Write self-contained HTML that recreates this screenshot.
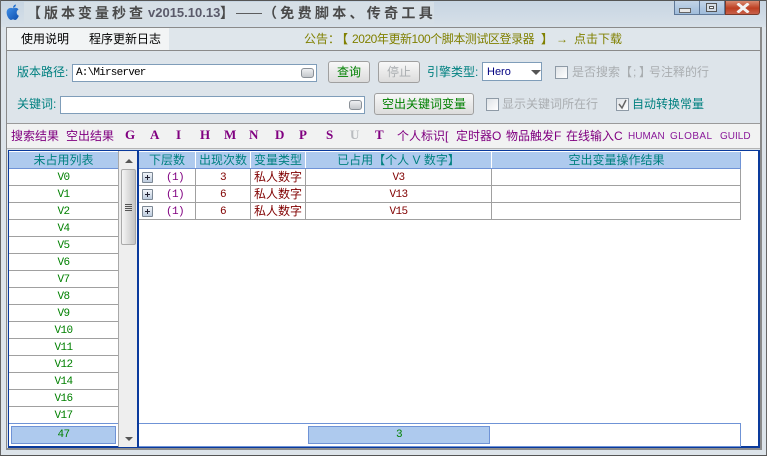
<!DOCTYPE html>
<html><head><meta charset="utf-8">
<style>
html,body{margin:0;padding:0;background:#fff}
#w{position:relative;width:767px;height:456px;overflow:hidden;background:#dde4ea;font-family:"Liberation Sans","WenQuanYi Zen Hei","Noto Sans CJK SC",sans-serif;font-size:12px;line-height:14px}
#w div,#w span.a,#w svg{position:absolute}
.t{white-space:nowrap}
.teal{color:#008080}.green{color:#008000}.pur{color:#800080}.mar{color:#800000}.gray{color:#a9adb0}.ol{color:#808000}
.inp{background:#fff;border:1px solid #7f9db9;box-sizing:border-box}
.btn{box-sizing:border-box;border:1px solid #a0a0a0;border-radius:3px;background:linear-gradient(#f8f8f8,#dcdcdc);text-align:center}
.oval{box-sizing:border-box;width:13px;height:10px;border:1px solid #8a9097;border-radius:3px;background:linear-gradient(#eef0f2,#c4c8cc)}
.cb{box-sizing:border-box;width:13px;height:13px;border:1px solid #8e9aa6;background:linear-gradient(135deg,#dfe3e7,#fff)}
.h{background:#aecaee;height:16px;top:152px;color:#008080;text-align:center;line-height:16px}
.sep{background:#fff;width:1px;top:153px;height:14px}
.r{background:#a0a0a0;height:1px}
.c{text-align:center;height:18px;line-height:18px;font-family:"Liberation Mono","WenQuanYi Zen Hei",monospace;font-size:11px;letter-spacing:-.6px;white-space:nowrap}
.z{font-family:inherit;font-size:12px;letter-spacing:0;height:16px;line-height:16px}
.plus{box-sizing:border-box;width:11px;height:11px;border:1px solid #7b8794;border-radius:1px;background:linear-gradient(#f2f5f9,#bccbdd);left:142px}
.plus::before{content:"";position:absolute;left:2px;top:4px;width:5px;height:1px;background:#223}
.plus::after{content:"";position:absolute;left:4px;top:2px;width:1px;height:5px;background:#223}
.l{font-family:"Liberation Serif",serif;font-weight:bold;font-size:13px;color:#800080;top:128px}
.ti{top:3px;font-size:14px;line-height:20px;font-weight:bold;color:#4a4a4a}
</style></head><body><div id="w">

<!-- window frame -->
<div style="left:0;top:0;width:767px;height:27px;background:linear-gradient(#c6d4e2,#d7e0e8)"></div>
<div style="left:24px;top:2px;width:410px;height:22px;background:#d6dfe6"></div>
<div style="left:0;top:0;width:767px;height:1px;background:#555"></div>
<div style="left:0;top:0;width:1px;height:456px;background:#666"></div>
<div style="left:766px;top:0;width:1px;height:456px;background:#666"></div>
<div style="left:0;top:455px;width:767px;height:1px;background:#555"></div>
<div style="left:6px;top:27px;width:1px;height:422px;background:#8a8a8a"></div>
<div style="left:760px;top:27px;width:2px;height:422px;background:#8a8a8a"></div>
<div style="left:6px;top:448px;width:756px;height:2px;background:#8c8c8c"></div>

<!-- apple icon -->
<svg style="left:5px;top:4px" width="16" height="17" viewBox="0 0 15 16"><defs><linearGradient id="ap" x1="0" y1="0" x2="1" y2="1"><stop offset="0" stop-color="#3f8fe8"/><stop offset="1" stop-color="#0f4fae"/></linearGradient></defs><path d="M7.500 4C5 3 1.500 4 1.500 8c0 3.500 2.500 7 4 7 1 0 1.200-.5 2-.5s1 .5 2 .5c1.300 0 2.800-2 3.500-4-2.500-1-2.800-4.500-.3-6C11.500 3.500 9.500 3 7.500 4z" fill="url(#ap)"/><path d="M7.500 3.500C7.500 2 8.700.7 10.300.5 10.300 2 9 3.500 7.500 3.500z" fill="#1f6fd0"/></svg>

<!-- title -->
<div class="t ti" style="left:27px;letter-spacing:3px">【版本变量秒查</div>
<div class="t ti" style="left:148px;font-size:13px;color:#5a5a6a">v2015.10.13</div>
<div class="t ti" style="left:220px">】</div>
<div class="t ti" style="left:236px;font-size:13px;font-weight:normal">——</div>
<div class="t ti" style="left:263px;letter-spacing:3.300px">（免费脚本、传奇工具</div>

<!-- window buttons -->
<div style="left:674px;top:1px;width:51px;height:14px;background:linear-gradient(#c3d4e7,#9fbcdb);border:1px solid #5f7898;border-top:0;box-sizing:border-box"></div>
<div style="left:699px;top:1px;width:1px;height:14px;background:#5f7898"></div>
<div style="left:679px;top:8px;width:10px;height:3px;background:#e8e8e8;border:1px solid #666"></div>
<div style="left:706px;top:3px;width:11px;height:9px;background:#d6dde5;border:1px solid #555;box-sizing:border-box"></div>
<div style="left:709px;top:6px;width:5px;height:3px;background:#fff;border:1px solid #555;box-sizing:border-box"></div>
<div style="left:725px;top:1px;width:35px;height:14px;background:linear-gradient(#d98a70,#bd3f22 55%,#c8604a);border:1px solid #7a3a2a;border-top:0;border-radius:0 0 3px 0;box-sizing:border-box"></div>
<svg style="left:736px;top:3px" width="14" height="10"><path d="M1.500 0.500L12.500 9.500M12.500 0.500L1.500 9.500" stroke="#f2f2f2" stroke-width="3" fill="none"/></svg>

<!-- menu bar -->
<div style="left:7px;top:28px;width:753px;height:22px;background:#dfe6eb"></div>
<div style="left:7px;top:28px;width:162px;height:22px;background:#f2f4f5"></div>
<div style="left:6px;top:27px;width:755px;height:1px;background:#8a8a8a"></div>
<div style="left:6px;top:50px;width:755px;height:1px;background:#8a8a8a"></div>
<div class="t" style="left:21px;top:32px;color:#000">使用说明</div>
<div class="t" style="left:89px;top:32px;color:#000">程序更新日志</div>
<div class="t ol" style="left:304px;top:32px">公告：</div>
<div class="t ol" style="left:336px;top:32px;font-weight:bold">【</div>
<div class="t ol" style="left:352px;top:32px;letter-spacing:-.45px">2020年更新100个脚本测试区登录器</div>
<div class="t ol" style="left:541px;top:32px;font-weight:bold">】</div>
<div class="t ol" style="left:556px;top:32px">→</div>
<div class="t ol" style="left:574px;top:32px">点击下载</div>

<!-- row 1 -->
<div class="t teal" style="left:17px;top:65px">版本路径:</div>
<div class="inp" style="left:72px;top:64px;width:245px;height:18px"></div>
<div class="t" style="left:76px;top:66px;font-family:'Liberation Mono',monospace;font-size:11px;letter-spacing:-.8px">A:\Mirserver</div>
<div class="oval" style="left:301px;top:68px"></div>
<div class="btn green" style="left:328px;top:61px;width:42px;height:22px;line-height:20px">查询</div>
<div class="btn gray" style="left:378px;top:61px;width:42px;height:22px;line-height:20px">停止</div>
<div class="t teal" style="left:427px;top:65px">引擎类型:</div>
<div class="inp" style="left:482px;top:62px;width:60px;height:19px"></div>
<div class="t" style="left:487px;top:65px;color:#000080;font-size:11px">Hero</div>
<svg style="left:531px;top:70px" width="10" height="5"><path d="M0 0h10L5 5z" fill="#555"/></svg>
<div class="cb" style="left:555px;top:66px"></div>
<div class="t gray" style="left:572px;top:65px">是否搜索</div>
<div class="t gray" style="left:620px;top:65px">【</div>
<div class="t gray" style="left:633px;top:65px">;</div>
<div class="t gray" style="left:639px;top:65px">】</div>
<div class="t gray" style="left:649px;top:65px">号注释的行</div>

<!-- row 2 -->
<div class="t teal" style="left:17px;top:97px">关键词:</div>
<div class="inp" style="left:60px;top:96px;width:305px;height:18px"></div>
<div class="oval" style="left:349px;top:100px"></div>
<div class="btn green" style="left:374px;top:93px;width:100px;height:22px;line-height:20px">空出关键词变量</div>
<div class="cb" style="left:486px;top:98px"></div>
<div class="t gray" style="left:502px;top:97px">显示关键词所在行</div>
<div class="cb" style="left:616px;top:98px"></div>
<svg style="left:617px;top:99px" width="11" height="11"><path d="M2 5l3 4 4-8" fill="none" stroke="#666" stroke-width="1.500"/></svg>
<div class="t teal" style="left:632px;top:97px">自动转换常量</div>

<!-- tab row -->
<div style="left:7px;top:124px;width:753px;height:24px;background:#f1f2f2"></div>
<div style="left:7px;top:123px;width:753px;height:1px;background:#9a9a9a"></div>
<div style="left:7px;top:148px;width:753px;height:1px;background:#b5b5b5"></div>
<div class="t pur" style="left:11px;top:129px">搜索结果</div>
<div class="t pur" style="left:66px;top:129px">空出结果</div>
<div class="t l" style="left:125px">G</div>
<div class="t l" style="left:150px">A</div>
<div class="t l" style="left:176px">I</div>
<div class="t l" style="left:200px">H</div>
<div class="t l" style="left:224px">M</div>
<div class="t l" style="left:249px">N</div>
<div class="t l" style="left:275px">D</div>
<div class="t l" style="left:299px">P</div>
<div class="t l" style="left:326px">S</div>
<div class="t l" style="left:350px;color:#b9bcbf">U</div>
<div class="t l" style="left:375px">T</div>
<div class="t pur" style="left:397px;top:129px">个人标识[</div>
<div class="t pur" style="left:456px;top:129px">定时器O</div>
<div class="t pur" style="left:506px;top:129px">物品触发F</div>
<div class="t pur" style="left:566px;top:129px">在线输入C</div>
<div class="t pur" style="left:628px;top:130px;font-size:10px;color:#8a1a9a">HUMAN</div>
<div class="t pur" style="left:670px;top:130px;font-size:10px;letter-spacing:.4px;color:#8a1a9a">GLOBAL</div>
<div class="t pur" style="left:720px;top:130px;font-size:10px;color:#8a1a9a">GUILD</div>

<!-- grid container -->
<div style="left:8px;top:150px;width:752px;height:298px;background:#fff;box-sizing:border-box;border:2px solid #0a3a9c;border-width:1px 2px 2px 1px"></div>
<div style="left:137px;top:151px;width:2px;height:296px;background:#0a3a9c"></div>

<!-- scrollbar -->
<div style="left:119px;top:151px;width:18px;height:296px;background:#eeeeee"></div>
<svg style="left:125px;top:159px" width="8" height="5"><path d="M4 0l4 4H0z" fill="#555"/></svg>
<svg style="left:125px;top:437px" width="8" height="5"><path d="M0 0h8L4 4z" fill="#555"/></svg>
<div style="left:121px;top:169px;width:15px;height:76px;box-sizing:border-box;border:1px solid #aaa;border-radius:2px;background:linear-gradient(90deg,#f5f5f5,#c4c4c4)"></div>
<div style="left:125px;top:204px;width:7px;height:1px;background:#555;box-shadow:0 2px 0 #555,0 4px 0 #555,0 6px 0 #555"></div>

<!-- left list -->
<div class="h" style="left:9px;width:109px">未占用列表</div>
<div style="left:9px;top:168px;width:109px;height:1px;background:#6f93d6"></div>
<div style="left:118px;top:151px;width:1px;height:296px;background:#a8a8a8"></div>
<div class="c green" style="left:9px;width:109px;top:169px">V0</div><div class="r" style="left:9px;width:109px;top:185px"></div>
<div class="c green" style="left:9px;width:109px;top:186px">V1</div><div class="r" style="left:9px;width:109px;top:202px"></div>
<div class="c green" style="left:9px;width:109px;top:203px">V2</div><div class="r" style="left:9px;width:109px;top:219px"></div>
<div class="c green" style="left:9px;width:109px;top:220px">V4</div><div class="r" style="left:9px;width:109px;top:236px"></div>
<div class="c green" style="left:9px;width:109px;top:237px">V5</div><div class="r" style="left:9px;width:109px;top:253px"></div>
<div class="c green" style="left:9px;width:109px;top:254px">V6</div><div class="r" style="left:9px;width:109px;top:270px"></div>
<div class="c green" style="left:9px;width:109px;top:271px">V7</div><div class="r" style="left:9px;width:109px;top:287px"></div>
<div class="c green" style="left:9px;width:109px;top:288px">V8</div><div class="r" style="left:9px;width:109px;top:304px"></div>
<div class="c green" style="left:9px;width:109px;top:305px">V9</div><div class="r" style="left:9px;width:109px;top:321px"></div>
<div class="c green" style="left:9px;width:109px;top:322px">V10</div><div class="r" style="left:9px;width:109px;top:338px"></div>
<div class="c green" style="left:9px;width:109px;top:339px">V11</div><div class="r" style="left:9px;width:109px;top:355px"></div>
<div class="c green" style="left:9px;width:109px;top:356px">V12</div><div class="r" style="left:9px;width:109px;top:372px"></div>
<div class="c green" style="left:9px;width:109px;top:373px">V14</div><div class="r" style="left:9px;width:109px;top:389px"></div>
<div class="c green" style="left:9px;width:109px;top:390px">V16</div><div class="r" style="left:9px;width:109px;top:406px"></div>
<div class="c green" style="left:9px;width:109px;top:407px">V17</div>
<div style="left:9px;top:423px;width:109px;height:1px;background:#6f93d6"></div>
<div style="left:11px;top:426px;width:105px;height:18px;box-sizing:border-box;background:#aecaee;border:1px solid #6f93d6"></div>
<div class="c green" style="left:11px;width:105px;top:426px">47</div>

<!-- right header -->
<div class="h" style="left:139px;width:56px">下层数</div>
<div class="h" style="left:196px;width:54px">出现次数</div>
<div class="h" style="left:251px;width:54px">变量类型</div>
<div class="h" style="left:306px;width:185px">已占用【个人 V 数字】</div>
<div class="h" style="left:492px;width:249px">空出变量操作结果</div>
<div class="sep" style="left:195px"></div><div class="sep" style="left:250px"></div><div class="sep" style="left:305px"></div><div class="sep" style="left:491px"></div>
<div style="left:139px;top:168px;width:602px;height:1px;background:#6f93d6"></div>
<div style="left:740px;top:152px;width:1px;height:16px;background:#6f93d6"></div>

<!-- right rows -->
<div class="r" style="left:139px;width:602px;top:185px"></div>
<div class="r" style="left:139px;width:602px;top:202px"></div>
<div class="r" style="left:139px;width:602px;top:219px"></div>
<div style="left:195px;top:169px;width:1px;height:50px;background:#a0a0a0"></div>
<div style="left:250px;top:169px;width:1px;height:50px;background:#a0a0a0"></div>
<div style="left:305px;top:169px;width:1px;height:50px;background:#a0a0a0"></div>
<div style="left:491px;top:169px;width:1px;height:50px;background:#a0a0a0"></div>
<div style="left:740px;top:169px;width:1px;height:50px;background:#a0a0a0"></div>

<div class="plus" style="top:172px"></div><div class="plus" style="top:189px"></div><div class="plus" style="top:206px"></div>
<div class="c pur" style="left:155px;width:40px;top:169px">(1)</div>
<div class="c pur" style="left:155px;width:40px;top:186px">(1)</div>
<div class="c pur" style="left:155px;width:40px;top:203px">(1)</div>
<div class="c mar" style="left:196px;width:54px;top:169px">3</div>
<div class="c mar" style="left:196px;width:54px;top:186px">6</div>
<div class="c mar" style="left:196px;width:54px;top:203px">6</div>
<div class="c mar z" style="left:251px;width:54px;top:169px">私人数字</div>
<div class="c mar z" style="left:251px;width:54px;top:186px">私人数字</div>
<div class="c mar z" style="left:251px;width:54px;top:203px">私人数字</div>
<div class="c mar" style="left:306px;width:185px;top:169px">V3</div>
<div class="c mar" style="left:306px;width:185px;top:186px">V13</div>
<div class="c mar" style="left:306px;width:185px;top:203px">V15</div>

<!-- right footer -->
<div style="left:139px;top:423px;width:602px;height:24px;box-sizing:border-box;border:1px solid #6f93d6;border-left:0"></div>
<div style="left:308px;top:426px;width:182px;height:18px;box-sizing:border-box;background:#aecaee;border:1px solid #6f93d6"></div>
<div class="c green" style="left:308px;width:182px;top:426px">3</div>

</div></body></html>
